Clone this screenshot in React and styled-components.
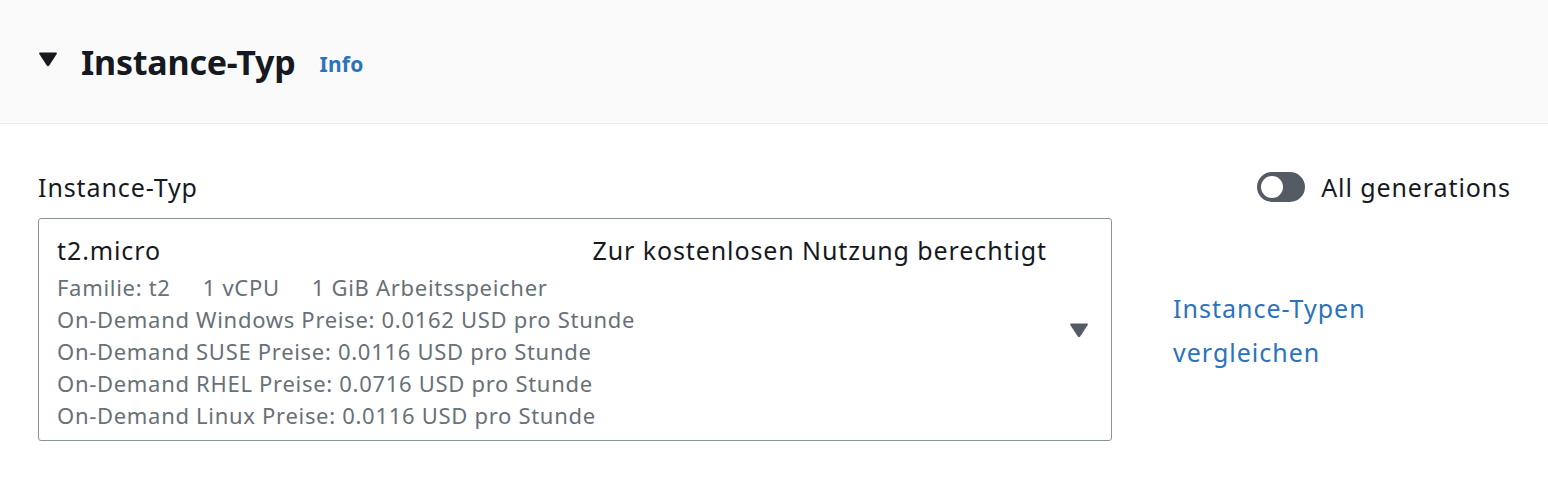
import React from "react";
import styled, { createGlobalStyle } from "styled-components";

const Global = createGlobalStyle`
  html, body { margin: 0; padding: 0; background: #ffffff; }
  body { font-family: "Noto Sans", "Open Sans", Arial, sans-serif; color: #16191f; }
`;

const Page = styled.div`
  width: 1548px;
  height: 480px;
  background: #ffffff;
  overflow: hidden;
`;

const Header = styled.div`
  height: 124px;
  box-sizing: border-box;
  background: #fafafa;
  border-bottom: 1px solid #eaeded;
  display: flex;
  align-items: center;
  padding: 0 0 0 38px;
`;

const Caret = styled.svg`
  width: 20px;
  height: 16px;
  margin-right: 23px;
  margin-top: -6px;
  flex: none;
`;

const Title = styled.h2`
  margin: 0;
  font-size: 34px;
  font-weight: 700;
  letter-spacing: -0.2px;
  color: #16191f;
  line-height: 44px;
`;

const InfoLink = styled.a`
  margin-left: 24px;
  margin-top: 4px;
  font-size: 21px;
  font-weight: 700;
  letter-spacing: 0.3px;
  color: #2a73bd;
  text-decoration: none;
`;

const Body = styled.div`
  padding: 48px 37px 0 38px;
`;

const TopRow = styled.div`
  display: flex;
  align-items: center;
  justify-content: space-between;
  height: 30px;
  margin-bottom: 16px;
`;

const Label = styled.label`
  font-size: 25px;
  letter-spacing: 0.9px;
  color: #16191f;
  line-height: 30px;
`;

const ToggleWrap = styled.div`
  display: flex;
  align-items: center;
  gap: 16px;
  font-size: 25px;
  letter-spacing: 0.9px;
  color: #16191f;
`;

const Track = styled.span`
  position: relative;
  width: 48px;
  height: 30px;
  border-radius: 15px;
  background: #545b64;
  display: inline-block;
`;

const Knob = styled.span`
  position: absolute;
  top: 4px;
  left: 4px;
  width: 22px;
  height: 22px;
  border-radius: 50%;
  background: #ffffff;
`;

const FieldRow = styled.div`
  display: flex;
  align-items: center;
`;

const Select = styled.div`
  width: 1074px;
  height: 223px;
  box-sizing: border-box;
  border: 1px solid #879596;
  border-radius: 3px;
  display: flex;
  align-items: center;
  padding: 0 22px 0 18px;
`;

const Content = styled.div`
  flex: 1;
  display: flex;
  flex-direction: column;
  padding-top: 6px;
`;

const MainLine = styled.div`
  display: flex;
  justify-content: space-between;
  font-size: 25px;
  letter-spacing: 0.9px;
  line-height: 32px;
  color: #16191f;
  margin-bottom: 5px;
`;

const Detail = styled.div`
  font-size: 22px;
  letter-spacing: 0.7px;
  line-height: 32px;
  color: #687078;
  white-space: pre;
`;

const SelectCaret = styled.svg`
  width: 20px;
  height: 16px;
  margin-left: 22px;
  flex: none;
`;

const Compare = styled.a`
  margin-left: 61px;
  font-size: 25px;
  letter-spacing: 1px;
  line-height: 44px;
  color: #2a73bd;
  text-decoration: none;
  width: 230px;
`;

const Triangle = ({ color }) => (
  <path d="M2 1.5 H18 Q19.5 1.5 18.7 3 L11.2 14.5 Q10 16 8.8 14.5 L1.3 3 Q0.5 1.5 2 1.5 Z" fill={color} />
);

export default function App() {
  return (
    <Page>
      <Global />
      <Header>
        <Caret viewBox="0 0 20 16">
          <Triangle color="#16191f" />
        </Caret>
        <Title>Instance-Typ</Title>
        <InfoLink href="#">Info</InfoLink>
      </Header>
      <Body>
        <TopRow>
          <Label>Instance-Typ</Label>
          <ToggleWrap>
            <Track>
              <Knob />
            </Track>
            All generations
          </ToggleWrap>
        </TopRow>
        <FieldRow>
          <Select>
            <Content>
              <MainLine>
                <span>t2.micro</span>
                <span>Zur kostenlosen Nutzung berechtigt</span>
              </MainLine>
              <Detail>{"Familie: t2     1 vCPU     1 GiB Arbeitsspeicher"}</Detail>
              <Detail>On-Demand Windows Preise: 0.0162 USD pro Stunde</Detail>
              <Detail>On-Demand SUSE Preise: 0.0116 USD pro Stunde</Detail>
              <Detail>On-Demand RHEL Preise: 0.0716 USD pro Stunde</Detail>
              <Detail>On-Demand Linux Preise: 0.0116 USD pro Stunde</Detail>
            </Content>
            <SelectCaret viewBox="0 0 20 16">
              <Triangle color="#545b64" />
            </SelectCaret>
          </Select>
          <Compare href="#">Instance-Typen vergleichen</Compare>
        </FieldRow>
      </Body>
    </Page>
  );
}
